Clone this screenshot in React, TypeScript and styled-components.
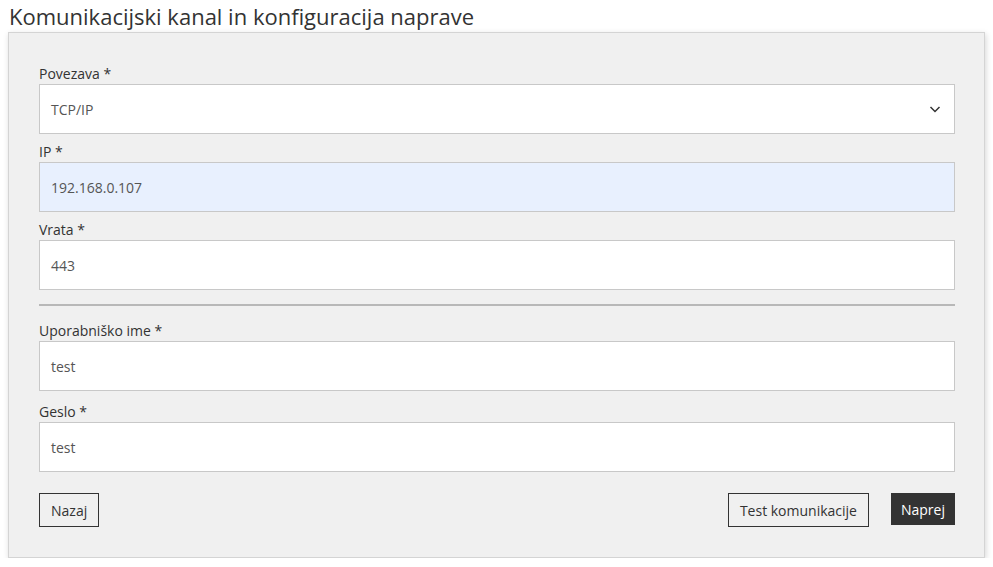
import React from 'react';
import styled, { createGlobalStyle } from 'styled-components';

const GlobalStyle = createGlobalStyle`
    html, body {
        margin: 0;
        background: #ffffff;
    }
    body {
        padding: 0 8px;
        font-family: 'Open Sans', 'Liberation Sans', sans-serif;
        color: #333;
    }
`;

const Title = styled.h1`
    margin: 0;
    padding-left: 1px;
    font-size: 22px;
    font-weight: 400;
    line-height: 32px;
    color: #333;
`;

const Card = styled.div`
    background: #f0f0f0;
    border: 1px solid #d4d4d4;
    box-shadow: 1px 2px 6px rgba(0, 0, 0, 0.16);
    padding: 31px 29px 30px 30px;
`;

const Group = styled.div<{ $gap: number }>`
    display: flex;
    flex-direction: column;
    gap: ${p => p.$gap}px;
`;

const Field = styled.div`
    display: flex;
    flex-direction: column;
`;

const Label = styled.label`
    font-size: 14px;
    line-height: 20px;
    color: #333;
`;

const InputBox = styled.div<{ $autofill?: boolean }>`
    position: relative;
    height: 50px;
    box-sizing: border-box;
    border: 1px solid #c8c8c8;
    background: ${p => (p.$autofill ? '#e8f0fe' : '#ffffff')};
    display: flex;
    align-items: center;
    padding: 0 11px;
    font-size: 14px;
    color: #555;
`;

const Chevron = styled.svg`
    position: absolute;
    right: 13px;
    top: 50%;
    margin-top: -6px;
`;

const Divider = styled.hr`
    border: none;
    height: 2px;
    background: #b8b8b8;
    margin: 14px 0 15px 0;
`;

const Actions = styled.div`
    display: flex;
    align-items: flex-start;
    margin-top: 21px;
    gap: 22px;
`;

const Spacer = styled.div`
    flex: 1;
`;

const Button = styled.button<{ $primary?: boolean }>`
    height: ${p => (p.$primary ? 32 : 34)}px;
    padding: 0 ${p => (p.$primary ? 10 : 11)}px;
    font-family: 'Open Sans', 'Liberation Sans', sans-serif;
    font-size: 14px;
    border: ${p => (p.$primary ? 'none' : '1px solid #333')};
    border-radius: 0;
    background: ${p => (p.$primary ? '#333' : 'transparent')};
    color: ${p => (p.$primary ? '#fff' : '#333')};
    cursor: pointer;
`;

type FieldDef = { label: string; value: string; select?: boolean; autofill?: boolean };

const connection: FieldDef[] = [
    { label: 'Povezava *', value: 'TCP/IP', select: true },
    { label: 'IP *', value: '192.168.0.107', autofill: true },
    { label: 'Vrata *', value: '443' },
];

const credentials: FieldDef[] = [
    { label: 'Uporabniško ime *', value: 'test' },
    { label: 'Geslo *', value: 'test' },
];

const FormField: React.FC<{ f: FieldDef }> = ({ f }) => (
    <Field>
        <Label>{f.label}</Label>
        <InputBox $autofill={f.autofill}>
            {f.value}
            {f.select && (
                <Chevron width="12" height="12" viewBox="0 0 12 12">
                    <path d="M1.5 4 L6 8.5 L10.5 4" fill="none" stroke="#333" strokeWidth="1.5" />
                </Chevron>
            )}
        </InputBox>
    </Field>
);

export default function App() {
    return (
        <>
            <GlobalStyle />
            <Title>Komunikacijski kanal in konfiguracija naprave</Title>
            <Card>
                <Group $gap={8}>
                    {connection.map(f => (
                        <FormField key={f.label} f={f} />
                    ))}
                </Group>
                <Divider />
                <Group $gap={11}>
                    {credentials.map(f => (
                        <FormField key={f.label} f={f} />
                    ))}
                </Group>
                <Actions>
                    <Button>Nazaj</Button>
                    <Spacer />
                    <Button>Test komunikacije</Button>
                    <Button $primary>Naprej</Button>
                </Actions>
            </Card>
        </>
    );
}
